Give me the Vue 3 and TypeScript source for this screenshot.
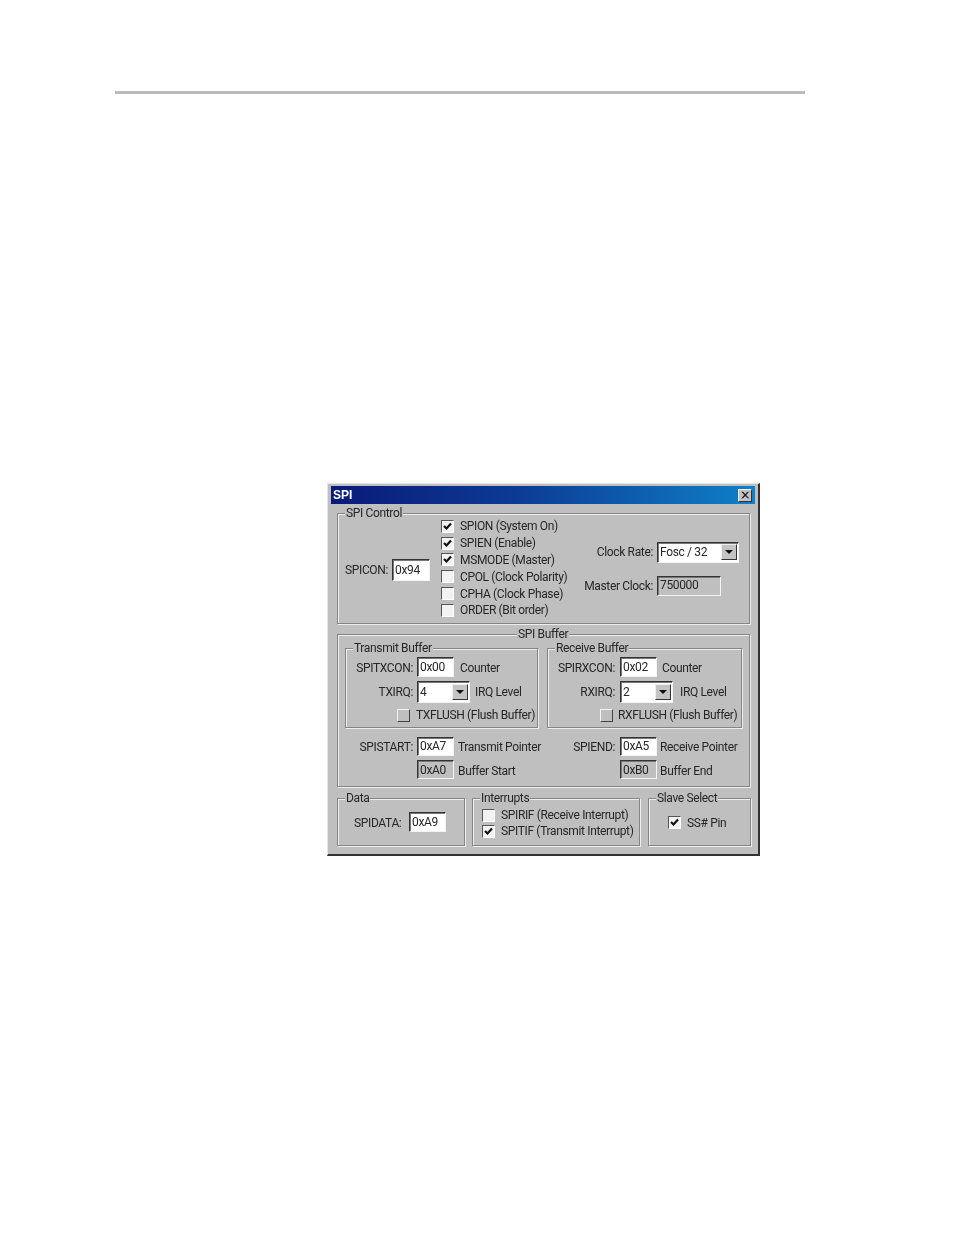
<script setup lang="ts">
interface CheckItem { label: string; checked: boolean }
interface BufferSide {
  kind: string; title: string; conLabel: string; con: string;
  irqLabel: string; irq: string; flush: string;
  ptrLabel: string; ptr: string; ptrText: string; end: string; endText: string;
}

const control: CheckItem[] = [
  { label: 'SPION (System On)', checked: true },
  { label: 'SPIEN (Enable)', checked: true },
  { label: 'MSMODE (Master)', checked: true },
  { label: 'CPOL (Clock Polarity)', checked: false },
  { label: 'CPHA (Clock Phase)', checked: false },
  { label: 'ORDER (Bit order)', checked: false },
];

const interrupts: CheckItem[] = [
  { label: 'SPIRIF (Receive Interrupt)', checked: false },
  { label: 'SPITIF (Transmit Interrupt)', checked: true },
];

const sides: BufferSide[] = [
  { kind: 'tx', title: 'Transmit Buffer', conLabel: 'SPITXCON:', con: '0x00', irqLabel: 'TXIRQ:', irq: '4',
    flush: 'TXFLUSH (Flush Buffer)', ptrLabel: 'SPISTART:', ptr: '0xA7', ptrText: 'Transmit Pointer', end: '0xA0', endText: 'Buffer Start' },
  { kind: 'rx', title: 'Receive Buffer', conLabel: 'SPIRXCON:', con: '0x02', irqLabel: 'RXIRQ:', irq: '2',
    flush: 'RXFLUSH (Flush Buffer)', ptrLabel: 'SPIEND:', ptr: '0xA5', ptrText: 'Receive Pointer', end: '0xB0', endText: 'Buffer End' },
];
</script>

<template>
  <div class="page">
    <div class="rule"></div>
    <div class="dialog">
      <div class="titlebar">
        <span class="title">SPI</span>
        <span class="close">
          <svg viewBox="0 0 13 12" width="13" height="12"><path d="M3 2.5 L9.5 9.5 M4 2.5 L10.5 9.5 M9.5 2.5 L3 9.5 M10.5 2.5 L4 9.5" stroke="#111" stroke-width="1" fill="none" /></svg>
        </span>
      </div>

      <section class="group control">
        <span class="legend">SPI Control</span>
        <div class="spicon">
          <span>SPICON:</span>
          <span class="field w38">0x94</span>
        </div>
        <div class="checks">
          <label v-for="c in control" :key="c.label" class="check-row">
            <span class="box">
              <svg v-if="c.checked" viewBox="0 0 11 11" width="11" height="11"><path d="M2 5 L4.5 7.5 L9 2.5" stroke="#111" stroke-width="2.2" fill="none" /></svg>
            </span>
            <span>{{ c.label }}</span>
          </label>
        </div>
        <div class="clock">
          <span class="clock-label">Clock Rate:</span>
          <span class="field combo w82">
            <span>Fosc / 32</span>
            <span class="arrow"><i></i></span>
          </span>
          <span class="clock-label">Master Clock:</span>
          <span class="field readonly w64">750000</span>
        </div>
      </section>

      <section class="group buffer">
        <span class="legend center">SPI Buffer</span>
        <div class="sides">
          <div v-for="s in sides" :key="s.kind" class="side" :class="s.kind">
            <div class="group sub">
              <span class="legend">{{ s.title }}</span>
              <div class="row con">
                <span class="lbl">{{ s.conLabel }}</span>
                <span class="field w37">{{ s.con }}</span>
                <span class="after">Counter</span>
              </div>
              <div class="row irq">
                <span class="lbl">{{ s.irqLabel }}</span>
                <span class="field combo w53">
                  <span>{{ s.irq }}</span>
                  <span class="arrow"><i></i></span>
                </span>
                <span class="after">IRQ Level</span>
              </div>
              <div class="row flush">
                <span class="box raised"></span>
                <span class="flush-text">{{ s.flush }}</span>
              </div>
            </div>
            <div class="pointers">
              <div class="row ptr">
                <span class="lbl">{{ s.ptrLabel }}</span>
                <span class="field w37 h19">{{ s.ptr }}</span>
                <span class="after2">{{ s.ptrText }}</span>
              </div>
              <div class="row ptr end">
                <span class="lbl"></span>
                <span class="field readonly w37 h19">{{ s.end }}</span>
                <span class="after2">{{ s.endText }}</span>
              </div>
            </div>
          </div>
        </div>
      </section>

      <div class="bottom">
        <section class="group data">
          <span class="legend">Data</span>
          <span class="data-label">SPIDATA:</span>
          <span class="field w37">0xA9</span>
        </section>
        <section class="group ints">
          <span class="legend">Interrupts</span>
          <label v-for="c in interrupts" :key="c.label" class="int-row">
            <span class="box">
              <svg v-if="c.checked" viewBox="0 0 11 11" width="11" height="11"><path d="M2 5 L4.5 7.5 L9 2.5" stroke="#111" stroke-width="2.2" fill="none" /></svg>
            </span>
            <span>{{ c.label }}</span>
          </label>
        </section>
        <section class="group slave">
          <span class="legend">Slave Select</span>
          <span class="box">
            <svg viewBox="0 0 11 11" width="11" height="11"><path d="M2 5 L4.5 7.5 L9 2.5" stroke="#111" stroke-width="2.2" fill="none" /></svg>
          </span>
          <span class="slave-text">SS# Pin</span>
        </section>
      </div>
    </div>
  </div>
</template>

<style scoped>
.page {
  width: 954px;
  height: 1235px;
  overflow: hidden;
  background: #fff;
  padding-top: 91px;
  box-sizing: border-box;
}
.rule {
  width: 690px;
  height: 3px;
  margin-left: 115px;
  background: #bbb;
}
.dialog {
  box-sizing: border-box;
  width: 433px;
  height: 373px;
  margin: 389px 0 0 327px;
  padding: 2px 3px 0 3px;
  background: #bfbfbf;
  border-top: 1px solid #e6e6e6;
  border-left: 1px solid #e6e6e6;
  border-right: 2px solid #333;
  border-bottom: 2px solid #333;
  font-family: Roboto, "Liberation Sans", Arial, sans-serif;
  font-size: 12px;
  letter-spacing: -0.35px;
  color: #262626;
  filter: blur(0.3px);
}
.titlebar {
  height: 18px;
  display: flex;
  align-items: center;
  justify-content: space-between;
  padding: 0 3px 0 2px;
  background: linear-gradient(90deg, #0a1a78 0%, #0c3c96 45%, #1080c8 100%);
}
.title {
  color: #fff;
  font-family: "Liberation Sans", Arial, sans-serif;
  font-weight: 700;
  font-size: 12px;
  letter-spacing: 0;
}
.close {
  box-sizing: border-box;
  width: 14px;
  height: 13px;
  background: #c4c4c4;
  border-top: 1px solid #eee;
  border-left: 1px solid #eee;
  border-right: 1px solid #333;
  border-bottom: 1px solid #333;
  display: flex;
  align-items: center;
  justify-content: center;
}
.group {
  position: relative;
  box-sizing: border-box;
  border: 1px solid #858585;
  box-shadow: inset 1px 1px 0 #eee, 1px 1px 0 #eee;
}
.legend {
  position: absolute;
  top: -8px;
  left: 7px;
  padding: 0 1px;
  background: #bfbfbf;
  line-height: 14px;
  white-space: nowrap;
}
.legend.center {
  left: 179px;
}
.control {
  display: flex;
  width: 413px;
  height: 111px;
  margin: 9px 0 0 6px;
  padding: 4px 10px 0 7px;
}
.spicon {
  flex: none;
  box-sizing: border-box;
  width: 85px;
  display: flex;
  align-items: center;
  justify-content: space-between;
  height: 104px;
}
.checks {
  margin-left: 11px;
}
.check-row {
  display: flex;
  align-items: center;
  gap: 6px;
  height: 16.8px;
  white-space: nowrap;
}
.box {
  box-sizing: border-box;
  flex: none;
  width: 13px;
  height: 13px;
  background: #f2f2f2;
  border-top: 1px solid #555;
  border-left: 1px solid #555;
  border-right: 1px solid #fff;
  border-bottom: 1px solid #fff;
  display: flex;
}
.box.raised {
  background: #bfbfbf;
  border-top-color: #f4f4f4;
  border-left-color: #f4f4f4;
  border-right-color: #444;
  border-bottom-color: #444;
}
.clock {
  margin-left: auto;
  align-self: center;
  display: grid;
  grid-template-columns: auto auto;
  align-items: center;
  column-gap: 4px;
  row-gap: 13px;
  margin-bottom: 4px;
}
.clock-label {
  justify-self: end;
}
.field {
  box-sizing: border-box;
  flex: none;
  display: flex;
  align-items: center;
  height: 20px;
  padding: 0 0 1px 2px;
  background: #fff;
  border-top: 1px solid #333;
  border-left: 1px solid #333;
  border-right: 1px solid #f4f4f4;
  border-bottom: 1px solid #f4f4f4;
  box-shadow: inset 1px 1px 0 #777;
  white-space: nowrap;
}
.field.readonly {
  background: #bfbfbf;
}
.w38 { width: 38px; height: 22px; }
.w37 { width: 37px; }
.w53 { width: 53px; height: 22px; padding-bottom: 0; }
.w64 { width: 64px; justify-self: start; }
.w82 { width: 82px; height: 21px; padding-bottom: 0; }
.h19 { height: 19px; }
.combo {
  justify-content: space-between;
}
.arrow {
  box-sizing: border-box;
  width: 16px;
  height: 16px;
  margin-right: 1px;
  background: #c4c4c4;
  border-top: 1px solid #eee;
  border-left: 1px solid #eee;
  border-right: 1px solid #333;
  border-bottom: 1px solid #333;
  display: flex;
  align-items: center;
  justify-content: center;
}
.arrow i {
  border-top: 4px solid #111;
  border-left: 4px solid transparent;
  border-right: 4px solid transparent;
}
.buffer {
  width: 413px;
  height: 153px;
  margin: 10px 0 0 6px;
  padding: 13px 0 0 7px;
}
.sides {
  display: flex;
  gap: 9px;
}
.side {
  width: 193px;
  flex: none;
}
.side.rx {
  width: 195px;
}
.sub {
  height: 80px;
  padding-top: 8px;
}
.row {
  display: flex;
  align-items: center;
  white-space: nowrap;
}
.lbl {
  width: 67px;
  flex: none;
  margin-right: 4px;
  text-align: right;
}
.rx .lbl {
  margin-right: 5px;
}
.con {
  height: 20px;
}
.con .lbl,
.con .after {
  padding-top: 2px;
}
.con .after {
  margin-left: 6px;
}
.rx .con .after {
  margin-left: 5px;
}
.irq {
  height: 22px;
  margin-top: 4px;
}
.irq .after {
  margin-left: 5px;
}
.rx .irq .after {
  margin-left: 7px;
}
.flush {
  height: 14px;
  margin-top: 5px;
  padding-left: 51px;
}
.flush-text {
  margin-left: 6px;
}
.rx .flush {
  padding-left: 52px;
}
.rx .flush-text {
  margin-left: 5px;
}
.pointers {
  margin-top: 9px;
  padding-left: 1px;
}
.ptr {
  height: 19px;
  margin-bottom: 4px;
}
.ptr.end .after2,
.ptr.end .field {
  padding-top: 2px;
}
.after2 {
  margin-left: 4px;
}
.rx .after2 {
  margin-left: 3px;
}
.bottom {
  display: flex;
  margin: 11px 0 0 6px;
}
.data {
  display: flex;
  align-items: center;
  gap: 4px;
  width: 128px;
  height: 48px;
  padding-left: 16px;
}
.data-label {
  width: 51px;
  padding-top: 2px;
}
.ints {
  width: 168px;
  height: 48px;
  margin-left: 7px;
  padding: 8px 0 0 9px;
}
.int-row {
  display: flex;
  align-items: center;
  gap: 6px;
  height: 16px;
  white-space: nowrap;
}
.slave {
  display: flex;
  align-items: center;
  gap: 6px;
  width: 103px;
  height: 48px;
  margin-left: 8px;
  padding-left: 19px;
}
.slave-text {
  padding-top: 2px;
}
</style>
